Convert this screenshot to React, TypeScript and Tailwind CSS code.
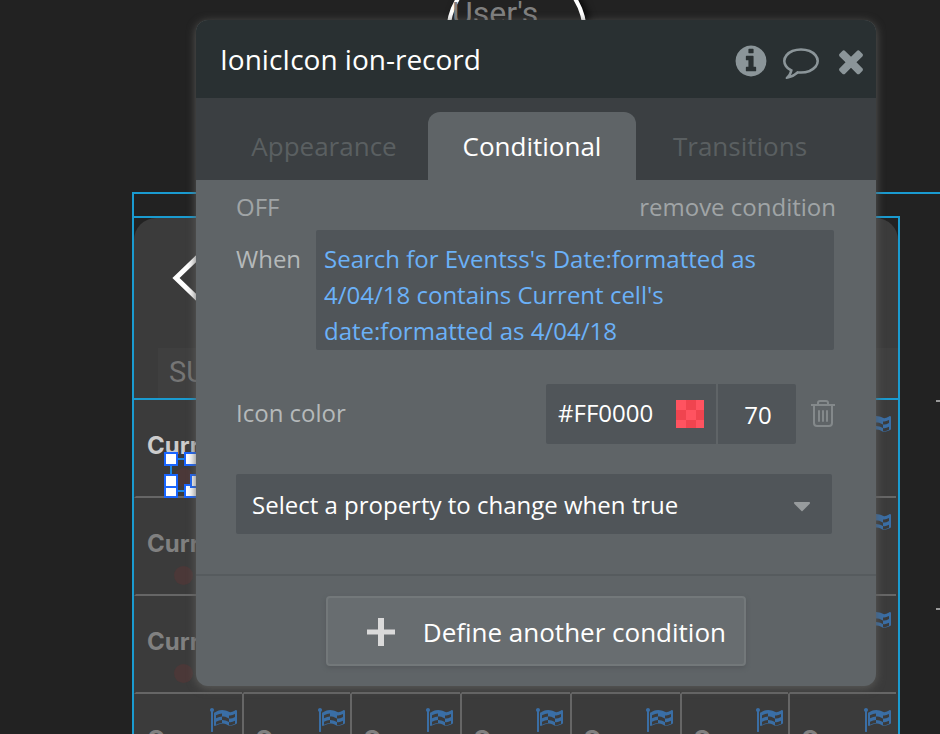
import React from "react";

const FLAG_PATH =
  "M832 1088v-193q-181 16-384 117v185q205-96 384-109zm0-418v-197q-172 8-384 126v189q215-111 384-118zm832 463v-184q-235 116-384 71v-224q-20-6-39-15-5-3-33-17t-34.5-17-31.5-15-34.5-15.5-32.5-13-36-12.5-35-8.5-39.5-7.5-39.5-4-44-2q-23 0-49 3v222h19q102 0 192.5 29t197.5 82q19 9 39 15v188q42 17 91 17 120 0 293-92zm0-427v-189q-169 91-306 91-45 0-78-8v196q148 42 384-90zm-1344-450q0 35-17.5 64t-46.5 46v1266q0 14-9 23t-23 9h-64q-14 0-23-9t-9-23v-1266q-29-17-46.5-46t-17.5-64q0-53 37.5-90.5t90.5-37.5 90.5 37.5 37.5 90.5zm1472 64v763q0 39-35 57-10 5-17 9-218 116-369 116-88 0-158-35l-28-14q-64-33-99-48t-91-29-114-14q-102 0-235.5 44t-228.5 102q-15 9-33 9-16 0-32-8-32-19-32-56v-742q0-35 31-55 35-21 78.5-42.5t114-52 152.5-49.5 155-19q112 0 209 31t209 86q38 19 89 19 122 0 310-112 22-12 31-17 31-16 62 2 31 20 31 55z";
const INFO_PATH =
  "M1152 1376v-160q0-14-9-23t-23-9h-96v-512q0-14-9-23t-23-9h-320q-14 0-23 9t-9 23v160q0 14 9 23t23 9h96v320h-96q-14 0-23 9t-9 23v160q0 14 9 23t23 9h448q14 0 23-9t9-23zm-128-896v-160q0-14-9-23t-23-9h-192q-14 0-23 9t-9 23v160q0 14 9 23t23 9h192q14 0 23-9t9-23zm640 416q0 209-103 385.5t-279.5 279.5-385.5 103-385.5-103-279.5-279.5-103-385.5 103-385.5 279.5-279.5 385.5-103 385.5 103 279.5 279.5 103 385.5z";
const COMMENT_PATH =
  "M896 384q-204 0-381.5 69.5t-282 187.5-104.5 255q0 112 71.5 213.5t201.5 175.5l87 50-27 96q-24 91-70 172 152-63 275-171l43-38 57 6q69 8 130 8 204 0 381.5-69.5t282-187.5 104.5-255-104.5-255-282-187.5-381.5-69.5zm896 512q0 174-120 321.5t-326 233-450 85.5q-70 0-145-8-198 175-460 242-49 14-114 22h-5q-15 0-27-10.5t-16-27.5v-1q-3-4-.5-12t2-10 4.5-9.5l6-9 7-8.5 8-9q7-8 31-34.5t34.5-38 31-39.5 32.5-51 27-59 26-76q-157-89-247.5-220t-90.5-281q0-174 120-321.5t326-233 450-85.5 450 85.5 326 233 120 321.5z";
const CLOSE_PATH =
  "M1490 1322q0 40-28 68l-136 136q-28 28-68 28t-68-28l-294-294-294 294q-28 28-68 28t-68-28l-136-136q-28-28-28-68t28-68l294-294-294-294q-28-28-28-68t28-68l136-136q28-28 68-28t68 28l294 294 294-294q28-28 68-28t68 28l136 136q28 28 28 68t-28 68l-294 294 294 294q28 28 28 68z";

function Glyph({ path, className }: { path: string; className: string }) {
  return (
    <svg viewBox="0 0 1792 1792" fill="currentColor" className={className} aria-hidden="true">
      <path d={path} />
    </svg>
  );
}

function DayCell({ row, col }: { row: number; col: number }) {
  const tone = row === 0 ? "text-[#cccccc]" : "text-[#808080]";
  const divider = row === 3 && col > 0 ? "border-l-2 border-l-[#666666]" : "border-l-2 border-l-transparent";
  return (
    <div className={`flex h-[98px] flex-col overflow-hidden border-b-2 border-b-[#666666] ${divider}`}>
      <Glyph path={FLAG_PATH} className="mt-3 ml-[73px] h-7 w-7 shrink-0 text-[#3a6ea5]" />
      <span
        className={`-mt-2 ml-[11px] font-[Inter,sans-serif] text-[24px] leading-7 font-bold whitespace-nowrap ${tone}`}
      >
        Curr
      </span>
      <span className="mt-2 ml-[38px] h-[19px] w-[19px] shrink-0 rounded-full bg-[#4b3838]" />
    </div>
  );
}

function Selection() {
  return (
    <svg className="absolute top-[52px] left-[30px] h-12 w-[60px]" viewBox="0 0 60 48" aria-hidden="true">
      <path d="M7 7H59V39H7Z" fill="none" stroke="#1d86e0" strokeWidth="2" />
      <g fill="#ffffff" stroke="#1a66ff" strokeWidth="2">
        <rect x="1" y="1" width="12" height="12" />
        <rect x="21" y="1" width="12" height="12" />
        <rect x="1" y="33" width="12" height="12" />
        <rect x="21" y="33" width="12" height="12" />
        <rect x="1" y="23" width="12" height="12" />
        <rect x="27" y="23" width="12" height="12" />
      </g>
    </svg>
  );
}

function Canvas() {
  return (
    <div className="pl-[132px]">
      <div className="h-48">
        <div className="absolute -top-9 left-[446px] h-[141px] w-[141px] rounded-full border-4 border-white shadow-[4px_4px_8px_#000000]" />
        <span className="absolute -top-[3px] left-[452px] font-[Roboto,sans-serif] text-[32px] leading-8 text-[#808080]">
          User's
        </span>
      </div>
      <div className="border-t-2 border-l-2 border-[#1a9bd0] pt-[22px]">
        <div className="-ml-[2px] w-[768px] border-2 border-[#1a9bd0]">
          <div className="flex h-[180px] flex-col rounded-t-[22px] bg-[#3b3b3b]">
            <svg className="mt-9 ml-9 h-[50px] w-8 shrink-0" viewBox="0 0 32 50" fill="none" aria-hidden="true">
              <path d="M32 -1L6 24L32 49" stroke="#ffffff" strokeWidth="5" />
            </svg>
            <span className="mt-11 ml-6 flex-1 bg-[#3f3f3f] pl-[11px] font-[Roboto,sans-serif] text-[29px] leading-[48px] text-[#757575]">
              SU
            </span>
          </div>
          <div className="relative border-t-2 border-[#1a9bd0] bg-[#3b3b3b]">
            <div className="grid grid-cols-[108px_108px_110px_110px_110px_108px_108px]">
              {Array.from({ length: 28 }, (_, i) => (
                <DayCell key={i} row={Math.floor(i / 7)} col={i % 7} />
              ))}
            </div>
            <Selection />
          </div>
        </div>
      </div>
      <div className="absolute top-[400px] right-0 h-[210px] w-1 border-y-2 border-[#999999]" />
    </div>
  );
}

const tabs = ["Appearance", "Conditional", "Transitions"];

function PropertyEditor() {
  return (
    <section
      aria-label="Property editor"
      className="absolute top-5 left-[196px] w-[680px] overflow-hidden rounded-xl bg-[#5f6467] shadow-[0_2px_10px_#5c5c5a]"
    >
      <header className="flex h-[78px] items-center gap-[14px] bg-[#293032] pr-[7px] pl-6">
        <h1 className="flex-1 text-[28px] leading-9 text-white">IonicIcon ion-record</h1>
        <button type="button" aria-label="Information" className="mt-1 text-[#8b9599]">
          <Glyph path={INFO_PATH} className="h-9 w-9" />
        </button>
        <button type="button" aria-label="Comment" className="mt-1 text-[#8b9599]">
          <Glyph path={COMMENT_PATH} className="h-9 w-9" />
        </button>
        <button type="button" aria-label="Close" className="mt-1 text-[#8b9599]">
          <Glyph path={CLOSE_PATH} className="h-9 w-9" />
        </button>
      </header>
      <div role="tablist" className="flex bg-[#3b3f42] px-6 pt-[14px]">
        {tabs.map((tab) => (
          <button
            key={tab}
            type="button"
            role="tab"
            aria-selected={tab === "Conditional"}
            className={`h-[68px] w-[208px] rounded-t-xl text-[26px] leading-9 ${
              tab === "Conditional" ? "bg-[#5f6467] text-white" : "text-[#5a5f61]"
            }`}
          >
            {tab}
          </button>
        ))}
      </div>
      <div className="px-10 pt-[9px] pb-10 text-[24px] leading-9">
        <div className="flex justify-between text-[#a0a4a6]">
          <span>OFF</span>
          <button type="button">remove condition</button>
        </div>
        <div className="mt-[5px] flex pr-[2px]">
          <label htmlFor="when" className="w-20 pt-[11px] text-[#b5b9ba]">
            When
          </label>
          <textarea
            id="when"
            rows={3}
            defaultValue="Search for Eventss's Date:formatted as 4/04/18 contains Current cell's date:formatted as 4/04/18"
            className="h-[120px] flex-1 resize-none overflow-hidden rounded-xs bg-[#505559] px-2 pt-[11px] text-[#6bb1f8]"
          />
        </div>
        <div className="mt-[34px] flex items-center">
          <label htmlFor="color" className="flex-1 pb-[2px] text-[#b5b9ba]">
            Icon color
          </label>
          <div className="flex h-[60px] w-[170px] items-center rounded-l-xs bg-[#505559] px-3">
            <input id="color" defaultValue="#FF0000" className="w-[118px] pb-[2px] text-white" />
            <svg className="h-7 w-7" viewBox="0 0 28 28" shapeRendering="crispEdges" aria-hidden="true">
              <path d="M0 0H28V28H0Z" fill="#ff5360" />
              <path d="M10 0H20V10H10ZM0 10H10V20H0ZM20 10H28V20H20ZM10 20H20V28H10Z" fill="#f0444f" />
            </svg>
          </div>
          <input
            aria-label="Opacity"
            defaultValue="70"
            className="ml-[2px] h-[60px] w-[78px] rounded-r-xs bg-[#505559] pl-[2px] text-center text-white"
          />
          <button type="button" aria-label="Delete property" className="ml-[14px] pb-[2px] text-[#84898b]">
            <svg className="h-8 w-[26px]" viewBox="0 0 26 32" fill="none" stroke="currentColor" strokeWidth="2" aria-hidden="true">
              <path d="M1 8H25M8 8V6Q8 4 10 4H16Q18 4 18 6V8M4 8V26Q4 29 7 29H19Q22 29 22 26V8" />
              <path d="M9 14V24M13 14V24M17 14V24" strokeLinecap="round" />
            </svg>
          </button>
        </div>
        <div className="relative mt-[30px] mr-1">
          <select
            aria-label="Property to change"
            className="h-[60px] w-full appearance-none rounded-xs bg-[#505559] px-4 pt-[2px] text-white"
          >
            <option>Select a property to change when true</option>
          </select>
          <svg
            className="pointer-events-none absolute top-7 right-[22px] h-[10px] w-4"
            viewBox="0 0 16 10"
            fill="#979b9d"
            aria-hidden="true"
          >
            <path d="M0.5 0H15.5Q16.500 1 15.500 2L8.500 9Q8 9.500 7.500 9L0.500 2Q-0.500 1 0.500 0Z" />
          </svg>
        </div>
      </div>
      <footer className="flex justify-center border-t-2 border-[#565b5e] py-5">
        <button
          type="button"
          className="flex h-[70px] w-[420px] items-center justify-between rounded border-2 border-[#73787a] bg-[#686d70] pt-[2px] pr-[18px] pl-[39px] text-[26px] leading-9 text-white shadow-[0_2px_4px_#55595c]"
        >
          <svg className="h-7 w-7" viewBox="0 0 28 28" fill="#dadada" aria-hidden="true">
            <path d="M11 -0.500H17V11.500H28V16.500H17V28H11V16.500H0V11.500H11Z" />
          </svg>
          Define another condition
        </button>
      </footer>
    </section>
  );
}

export default function App() {
  return (
    <main className="relative h-screen overflow-hidden bg-[#222222] font-['Open_Sans',sans-serif]">
      <Canvas />
      <PropertyEditor />
    </main>
  );
}
